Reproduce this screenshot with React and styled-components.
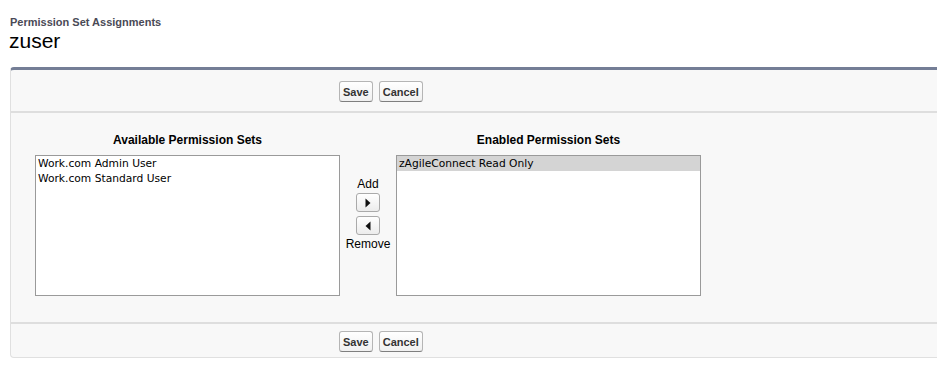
import React, { useState } from 'react';
import styled, { createGlobalStyle } from 'styled-components';

const GlobalStyle = createGlobalStyle`
  html, body {
    margin: 0;
    padding: 0;
    background: #ffffff;
    font-family: "Liberation Sans", Arial, sans-serif;
    overflow: hidden;
  }
`;

const Page = styled.div`
  padding-top: 16px;
  width: 937px;
`;

const Header = styled.div`
  padding-left: 10px;
  margin-bottom: 14px;
`;

const Kicker = styled.div`
  font-size: 11px;
  line-height: 13px;
  font-weight: bold;
  color: #4a4a56;
`;

const Title = styled.h1`
  margin: 0 0 0 -1px;
  font-size: 21px;
  line-height: 24px;
  font-weight: normal;
  color: #000;
`;

const Panel = styled.div`
  margin-left: 10px;
  background: #f8f8f8;
  border-top: 3px solid #747e96;
  border-left: 1px solid #e0e0e0;
  border-bottom: 1px solid #e0e0e0;
  border-radius: 4px 0 0 4px;
`;

const ButtonBar = styled.div`
  display: flex;
  justify-content: flex-start;
  gap: 6px;
  padding: ${p => (p.$bottom ? '7px 0 5px 328px' : '11px 0 9px 328px')};
  border-${p => (p.$bottom ? 'top' : 'bottom')}: 2px solid #dedede;
`;

const Btn = styled.button`
  font-family: "Liberation Sans", Arial, sans-serif;
  font-size: 11px;
  font-weight: bold;
  color: #333;
  height: 21px;
  padding: 0 3px;
  border: 1px solid #b5b5b5;
  border-bottom-color: #7f7f7f;
  border-radius: 3px;
  background: linear-gradient(#ffffff, #f0f0f0);
  cursor: pointer;
`;

const Body = styled.div`
  display: flex;
  align-items: flex-start;
  padding: 19px 0 26px 24px;
`;

const Column = styled.div`
  display: flex;
  flex-direction: column;
  align-items: center;
  width: 305px;
`;

const ColumnTitle = styled.div`
  font-size: 12px;
  line-height: 16px;
  font-weight: bold;
  color: #000;
  margin-bottom: 7px;
`;

const ListBox = styled.ul`
  list-style: none;
  margin: 0;
  padding: 0;
  box-sizing: border-box;
  width: 305px;
  height: 141px;
  background: #fff;
  border: 1px solid #9a9a9a;
  overflow: hidden;
`;

const ListItem = styled.li`
  font-family: "DejaVu Sans", Verdana, sans-serif;
  font-size: 10.7px;
  line-height: 15px;
  padding-left: 2px;
  color: #000;
  background: ${p => (p.$selected ? '#d4d4d4' : 'transparent')};
  cursor: default;
`;

const Mover = styled.div`
  width: 56px;
  display: flex;
  flex-direction: column;
  align-items: center;
  padding-top: 45px;
  font-size: 12px;
  color: #000;
`;

const MoverLabel = styled.div`
  line-height: 14px;
  margin-top: ${p => p.$mt || '0'};
`;

const ArrowBtn = styled.button`
  box-sizing: border-box;
  width: 24px;
  height: 19px;
  margin-top: ${p => p.$mt || '0'};
  padding: 0;
  display: flex;
  align-items: center;
  justify-content: center;
  border: 1px solid #aaa;
  border-radius: 3px;
  background: linear-gradient(#ffffff, #ececec);
  cursor: pointer;
`;

const Arrow = ({ dir }) => (
  <svg width="6" height="10" viewBox="0 0 6 10">
    {dir === 'right' ? (
      <polygon points="0.5,0.5 5.5,5 0.5,9.5" fill="#111" />
    ) : (
      <polygon points="5.5,0.5 0.5,5 5.5,9.5" fill="#111" />
    )}
  </svg>
);

export default function App() {
  const [available, setAvailable] = useState(['Work.com Admin User', 'Work.com Standard User']);
  const [enabled, setEnabled] = useState(['zAgileConnect Read Only']);
  const [selAvail, setSelAvail] = useState(null);
  const [selEnabled, setSelEnabled] = useState('zAgileConnect Read Only');

  const add = () => {
    if (!selAvail) return;
    setAvailable(available.filter(a => a !== selAvail));
    setEnabled([...enabled, selAvail]);
    setSelAvail(null);
  };

  const remove = () => {
    if (!selEnabled) return;
    setEnabled(enabled.filter(a => a !== selEnabled));
    setAvailable([...available, selEnabled]);
    setSelEnabled(null);
  };

  const buttons = bottom => (
    <ButtonBar $bottom={bottom}>
      <Btn>Save</Btn>
      <Btn>Cancel</Btn>
    </ButtonBar>
  );

  return (
    <Page>
      <GlobalStyle />
      <Header>
        <Kicker>Permission Set Assignments</Kicker>
        <Title>zuser</Title>
      </Header>
      <Panel>
        {buttons(false)}
        <Body>
          <Column>
            <ColumnTitle>Available Permission Sets</ColumnTitle>
            <ListBox>
              {available.map(name => (
                <ListItem key={name} $selected={selAvail === name} onClick={() => setSelAvail(name)}>
                  {name}
                </ListItem>
              ))}
            </ListBox>
          </Column>
          <Mover>
            <MoverLabel>Add</MoverLabel>
            <ArrowBtn $mt="2px" onClick={add}><Arrow dir="right" /></ArrowBtn>
            <ArrowBtn $mt="4px" onClick={remove}><Arrow dir="left" /></ArrowBtn>
            <MoverLabel $mt="2px">Remove</MoverLabel>
          </Mover>
          <Column>
            <ColumnTitle>Enabled Permission Sets</ColumnTitle>
            <ListBox>
              {enabled.map(name => (
                <ListItem key={name} $selected={selEnabled === name} onClick={() => setSelEnabled(name)}>
                  {name}
                </ListItem>
              ))}
            </ListBox>
          </Column>
        </Body>
        {buttons(true)}
      </Panel>
    </Page>
  );
}
